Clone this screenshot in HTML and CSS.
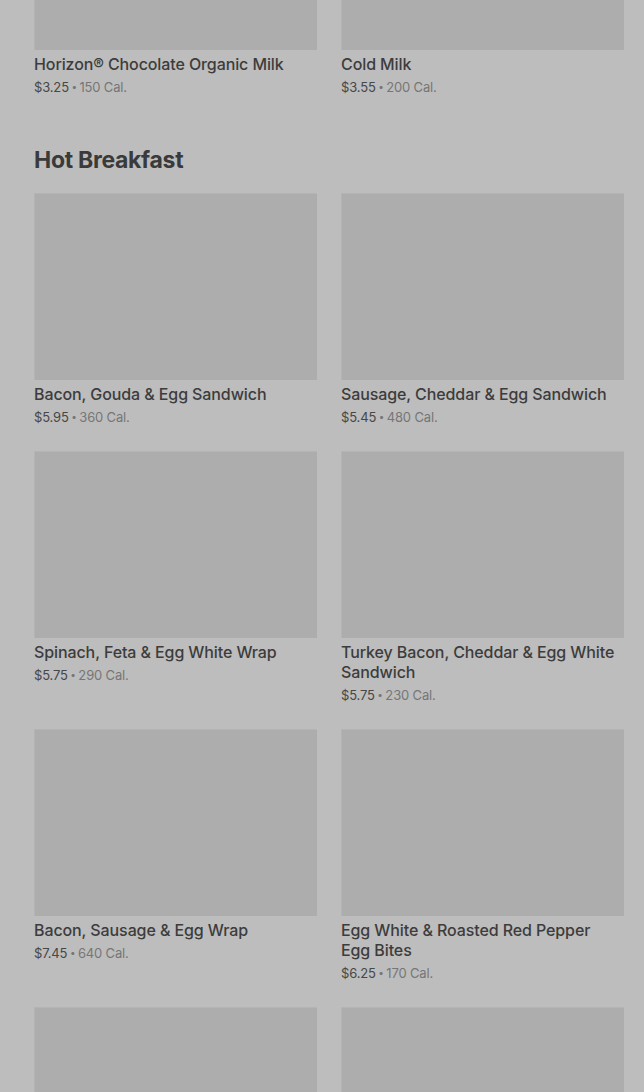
FILE: index.html
```html
<!DOCTYPE html>
<html lang="en">
  <head>
    <meta charset="UTF-8" />
    <meta name="viewport" content="width=device-width, initial-scale=1.0" />
    <title>Menu</title>
    <link rel="stylesheet" href="styles.css">
  </head>
  <body>
    <main class="menu">
      <section class="category category-scrolled">
        <div class="grid">
          <div class="item">
            <div class="thumb"></div>
            <h3>Horizon® Chocolate Organic Milk</h3>
            <p class="meta"><span class="price">$3.25</span> <span class="dot">•</span> 150 Cal.</p>
          </div>
          <div class="item">
            <div class="thumb"></div>
            <h3>Cold Milk</h3>
            <p class="meta"><span class="price">$3.55</span> <span class="dot">•</span> 200 Cal.</p>
          </div>
        </div>
      </section>

      <section class="category">
        <h2>Hot Breakfast</h2>
        <div class="grid">
          <div class="item">
            <div class="thumb"></div>
            <h3>Bacon, Gouda &amp; Egg Sandwich</h3>
            <p class="meta"><span class="price">$5.95</span> <span class="dot">•</span> 360 Cal.</p>
          </div>
          <div class="item">
            <div class="thumb"></div>
            <h3>Sausage, Cheddar &amp; Egg Sandwich</h3>
            <p class="meta"><span class="price">$5.45</span> <span class="dot">•</span> 480 Cal.</p>
          </div>
          <div class="item">
            <div class="thumb"></div>
            <h3>Spinach, Feta &amp; Egg White Wrap</h3>
            <p class="meta"><span class="price">$5.75</span> <span class="dot">•</span> 290 Cal.</p>
          </div>
          <div class="item">
            <div class="thumb"></div>
            <h3>Turkey Bacon, Cheddar &amp; Egg White Sandwich</h3>
            <p class="meta"><span class="price">$5.75</span> <span class="dot">•</span> 230 Cal.</p>
          </div>
          <div class="item">
            <div class="thumb"></div>
            <h3>Bacon, Sausage &amp; Egg Wrap</h3>
            <p class="meta"><span class="price">$7.45</span> <span class="dot">•</span> 640 Cal.</p>
          </div>
          <div class="item">
            <div class="thumb"></div>
            <h3>Egg White &amp; Roasted Red Pepper Egg Bites</h3>
            <p class="meta"><span class="price">$6.25</span> <span class="dot">•</span> 170 Cal.</p>
          </div>
          <div class="item">
            <div class="thumb"></div>
          </div>
          <div class="item">
            <div class="thumb"></div>
          </div>
        </div>
      </section>
    </main>
  </body>
</html>
```

FILE: styles.css
```css
* {
  margin: 0;
  padding: 0;
  box-sizing: border-box;
}
html,
body {
  background-color: #bdbdbd;
  overflow: hidden;
}
body {
  font-family: "Inter", "Roboto", sans-serif;
  color: #3b3b3b;
}
.menu {
  padding: 0 20px 0 34px;
}
/* page is scrolled: the first row is partly above the fold */
.category-scrolled {
  margin-top: -137px;
}
h2 {
  font-size: 23px;
  line-height: 30px;
  font-weight: 700;
  letter-spacing: -0.3px;
  color: #3a3a3a;
  margin-top: 48px;
  margin-bottom: 18px;
}
.grid {
  display: grid;
  grid-template-columns: 1fr 1fr;
  column-gap: 24px;
  row-gap: 24px;
}
.thumb {
  height: 187px;
  background-color: #adadad;
  border-top: 1px solid #b4b4b4;
  border-left: 1px solid #b4b4b4;
}
.item h3 {
  margin-top: 4px;
  padding-right: 6px;
  font-size: 16px;
  line-height: 20px;
  font-weight: 500;
  letter-spacing: -0.1px;
  color: #3c3c3c;
}
.meta {
  margin-top: 3px;
  font-size: 13px;
  line-height: 20px;
  letter-spacing: -0.15px;
  color: #767676;
}
.price {
  color: #474747;
}
.dot {
  font-size: 10px;
  line-height: 1;
  vertical-align: 2px;
  margin: 0 -1px;
}
```
